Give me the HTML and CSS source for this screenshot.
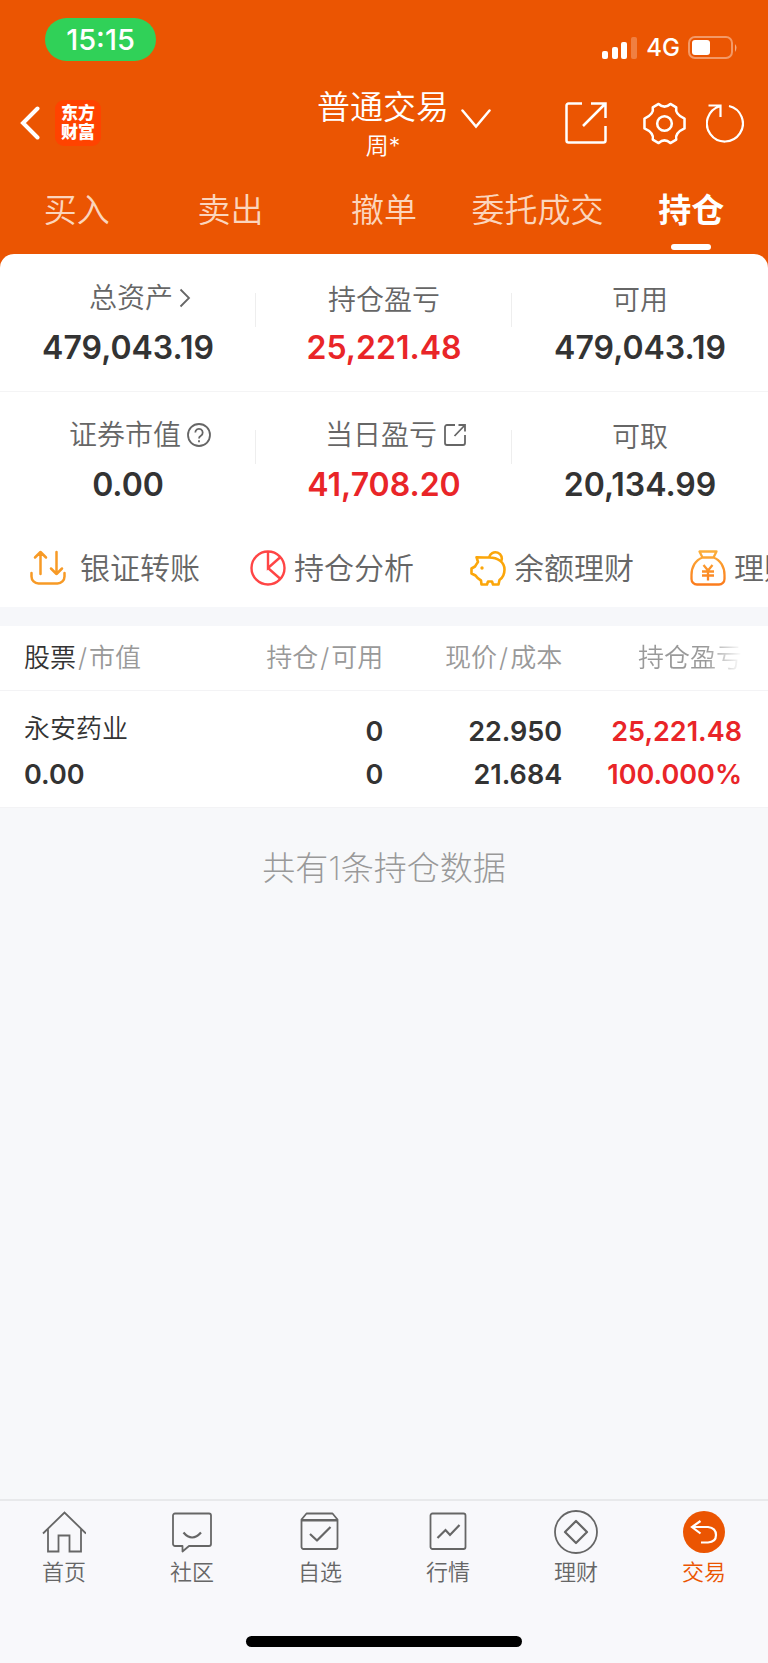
FILE: index.html
```html
<!DOCTYPE html>
<html lang="zh-CN">
<head>
  <meta charset="UTF-8">
  <meta name="viewport" content="width=device-width, initial-scale=1">
  <title>普通交易 - 持仓</title>
  <link rel="stylesheet" href="styles.css">
</head>
<body>

<header class="header">
  <div class="status">
    <span class="clock">15:15</span>
    <div class="signals">
      <svg width="36" height="22" viewBox="0 0 36 22" fill="#fff">
        <rect x="0" y="14" width="6" height="8" rx="2"/>
        <rect x="10" y="10" width="6" height="12" rx="2"/>
        <rect x="19" y="5" width="6" height="17" rx="2"/>
        <rect x="29" y="0" width="6" height="22" rx="2" opacity=".25"/>
      </svg>
      <span class="network">4G</span>
      <svg width="50" height="24" viewBox="0 0 50 24">
        <rect x="1" y="1" width="43" height="21" rx="6" fill="none" stroke="#fff" stroke-width="2" opacity=".4"/>
        <rect x="4" y="4" width="18" height="15" rx="3" fill="#fff"/>
        <path d="M47 8q3 3.500 0 8z" fill="#fff" opacity=".5"/>
      </svg>
    </div>
  </div>

  <div class="nav">
    <div class="nav-left">
      <button class="icon-button" aria-label="返回">
        <svg width="20" height="34" viewBox="0 0 20 34" fill="none" stroke="#fff" stroke-width="4" stroke-linecap="round"><path d="M17.500 2.500L3 17l14.500 14.500" stroke-linejoin="miter"/></svg>
      </button>
      <a class="logo" href="#">东方<br>财富</a>
    </div>
    <div class="nav-title">
      <h1>普通交易</h1>
      <p>周*</p>
    </div>
    <div class="nav-right">
      <button class="icon-button switch" aria-label="切换账户">
        <svg width="30" height="20" viewBox="0 0 30 20" fill="none" stroke="#fff" stroke-width="2.500" stroke-linecap="round"><path d="M1.500 1.500L15 17.500l13.500-16"/></svg>
      </button>
      <button class="icon-button share" aria-label="分享">
        <svg width="42" height="42" viewBox="0 0 42 42" fill="none" stroke="#fff" stroke-width="2.500"><path d="M17 1.500H3.500a2 2 0 0 0-2 2v35a2 2 0 0 0 2 2h35a2 2 0 0 0 2-2V24M26 1.500h14.500V16M40 2L18 24"/></svg>
      </button>
      <button class="icon-button gear" aria-label="设置">
        <svg width="43" height="43" viewBox="0 0 44 44" fill="none" stroke="#fff" stroke-width="2.600" stroke-linejoin="round"><path d="M16 2Q22 7.500 28 2L34 5.500Q32.500 12.500 42.500 17V27Q32.500 31.500 34 38.500L28 42Q22 36.500 16 42L10 38.500Q11.500 31.500 1.500 27V17Q11.500 12.500 10 5.500Z"/><circle cx="22" cy="22" r="7.500"/></svg>
      </button>
      <button class="icon-button" aria-label="刷新">
        <svg width="38" height="40" viewBox="0 0 38 40" fill="none" stroke="#fff" stroke-width="2.200"><path d="M23 3A18 18 0 1 1 14 3.200M2.500 2.500H14.500V14"/></svg>
      </button>
    </div>
  </div>

  <nav class="tabs">
    <a class="tab" href="#">买入</a>
    <a class="tab" href="#">卖出</a>
    <a class="tab" href="#">撤单</a>
    <a class="tab" href="#">委托成交</a>
    <a class="tab active" href="#">持仓</a>
  </nav>
</header>

<main class="main">
  <section class="assets">
    <div class="asset-row">
      <div class="asset">
        <a class="label" href="#">总资产<svg width="12" height="20" viewBox="0 0 12 20" fill="none" stroke="#666" stroke-width="1.800"><path d="M1.500 1.500L10 10l-8.500 8.500"/></svg></a>
        <strong>479,043.19</strong>
      </div>
      <div class="asset">
        <span class="label">持仓盈亏</span>
        <strong class="up">25,221.48</strong>
      </div>
      <div class="asset">
        <span class="label">可用</span>
        <strong>479,043.19</strong>
      </div>
    </div>
    <div class="asset-row">
      <div class="asset">
        <a class="label" href="#">证券市值<svg width="24" height="24" viewBox="0 0 24 24" fill="none" stroke="#666" stroke-width="1.800"><circle cx="12" cy="12" r="11"/><path d="M8.300 9.500a3.700 3.700 0 1 1 5.600 3.200c-1.300.800-1.900 1.300-1.900 2.800M12 17.200v2"/></svg></a>
        <strong>0.00</strong>
      </div>
      <div class="asset">
        <a class="label" href="#">当日盈亏<svg width="24" height="24" viewBox="0 0 24 24" fill="none" stroke="#666" stroke-width="1.800"><path d="M12 2H4a2 2 0 0 0-2 2v16a2 2 0 0 0 2 2h16a2 2 0 0 0 2-2v-8M15.500 2H22v6.500M22 2L11.500 13"/></svg></a>
        <strong class="up">41,708.20</strong>
      </div>
      <div class="asset">
        <span class="label">可取</span>
        <strong>20,134.99</strong>
      </div>
    </div>
  </section>

  <nav class="actions">
    <a class="action wide" href="#">
      <svg width="36" height="36" viewBox="0 0 36 36" fill="none" stroke="#f79a26" stroke-width="2.500" stroke-linecap="round" stroke-linejoin="round"><path d="M1.500 23v3.500a7 7 0 0 0 7 7h19a7 7 0 0 0 7-7V23M10.500 24V2M5 7.500L10.500 2l5.500 5.500M26.500 2v22M21 18.500l5.500 5.500 5.500-5.500"/></svg>
      银证转账
    </a>
    <a class="action" href="#">
      <svg width="36" height="36" viewBox="0 0 36 36" fill="none" stroke="#ff4545" stroke-width="2.400"><circle cx="18" cy="18" r="16.500"/><path d="M18 1.500V18L30.500 7M18 18l12.500 11"/></svg>
      持仓分析
    </a>
    <a class="action" href="#">
      <svg width="36" height="36" viewBox="0 0 36 36" fill="none" stroke="#fba60a" stroke-width="2.600" stroke-linejoin="round"><path d="M19 7.500H14L6.500 7.200 8 12Q6.500 14 5 16.500L1.500 18.500V23.500L5.500 25.500Q7.500 28.500 11 30.500L11.500 34.500H17L18 31.500H22L23 34.500H28.500L29.500 30Q34.500 26.500 34.500 19.500C34.500 12 28 7.500 19 7.500ZM19 7.500A6.500 6.500 0 1 1 31 12"/><circle cx="12" cy="18" r="1.700" fill="#fba60a" stroke="none"/></svg>
      余额理财
    </a>
    <a class="action" href="#">
      <svg width="36" height="36" viewBox="0 0 36 36" fill="none" stroke="url(#bag)" stroke-width="2.300" stroke-linejoin="round"><defs><linearGradient id="bag" gradientUnits="userSpaceOnUse" x1="0" y1="0" x2="0" y2="36"><stop offset="0" stop-color="#fcb03a"/><stop offset="1" stop-color="#fb7a1c"/></linearGradient></defs><path d="M9.500 1.500H26.500L23.500 7.500H12.500ZM12.500 7.500C5.500 10 1.500 17 1.500 25V29A5.500 5.500 0 0 0 7 34.500H29A5.500 5.500 0 0 0 34.500 29V25C34.500 17 30.500 10 23.500 7.500M13.500 15L18 20.500 22.500 15M12 21.500H24M12 25.500H24M18 20.500V30.500"/></svg>
      理财
    </a>
  </nav>

  <section class="holdings">
    <table>
      <thead>
        <tr>
          <th><b>股票</b><i>/</i>市值</th>
          <th>持仓<i>/</i>可用</th>
          <th>现价<i>/</i>成本</th>
          <th><span class="fade">持仓盈亏</span></th>
        </tr>
      </thead>
      <tbody>
        <tr>
          <td><span class="name">永安药业</span>0.00</td>
          <td>0<br>0</td>
          <td>22.950<br>21.684</td>
          <td class="up">25,221.48<br>100.000%</td>
        </tr>
      </tbody>
    </table>
  </section>

  <p class="total">共有1条持仓数据</p>
</main>

<footer class="footer">
  <nav class="tabbar">
    <a class="tabbar-item" href="#">
      <svg width="44" height="44" viewBox="0 0 44 44" fill="none" stroke="currentColor" stroke-width="1.800"><path d="M1 23.500L22.500 2.500 44 23.500M6 19V41.500H16.500V25.500H27.500V41.500H39V19"/></svg>
      首页
    </a>
    <a class="tabbar-item" href="#">
      <svg width="44" height="44" viewBox="0 0 44 44" fill="none" stroke="currentColor" stroke-width="1.800" stroke-linejoin="round"><path d="M5 3.500H39a2 2 0 0 1 2 2V34a2 2 0 0 1-2 2H19L12.500 41.500V36H5a2 2 0 0 1-2-2V5.500a2 2 0 0 1 2-2Z"/><path d="M13.500 22.500Q22 32.500 31 22.500" stroke-width="2.200"/></svg>
      社区
    </a>
    <a class="tabbar-item" href="#">
      <svg width="44" height="44" viewBox="0 0 44 44" fill="none" stroke="currentColor" stroke-width="1.800" stroke-linejoin="round"><path d="M3.500 9.500L8.500 3.500H34.500L39.500 9.500V37a2 2 0 0 1-2 2H5.500a2 2 0 0 1-2-2Z"/><path d="M3.500 10.200H39.500" stroke-width="2.600"/><path d="M12 24L19 30.500 32.500 17" stroke-width="2.200"/></svg>
      自选
    </a>
    <a class="tabbar-item" href="#">
      <svg width="44" height="44" viewBox="0 0 44 44" fill="none" stroke="currentColor" stroke-width="1.800"><rect x="4.500" y="3.500" width="35" height="35.500" rx="2"/><path d="M11.500 28L19.500 20 24 25 33.500 15" stroke-width="2.200"/></svg>
      行情
    </a>
    <a class="tabbar-item" href="#">
      <svg width="44" height="44" viewBox="0 0 44 44" fill="none" stroke="currentColor" stroke-width="1.800" stroke-linejoin="round"><circle cx="22" cy="22" r="21"/><path d="M22 11L33 22 22 33 11 22Z" stroke-width="2.200"/></svg>
      理财
    </a>
    <a class="tabbar-item active" href="#">
      <svg width="44" height="44" viewBox="0 0 44 44" fill="none"><circle cx="22" cy="22" r="21" fill="#eb5502"/><path d="M18.500 11L10 17 18.500 23.500M10 17H26Q34 18 34 25T26 32.500H19" stroke="#fff" stroke-width="2.200"/></svg>
      交易
    </a>
  </nav>
  <div class="home-indicator"></div>
</footer>

</body>
</html>
```
FILE: styles.css
```css
* {
  box-sizing: border-box;
}

body {
  margin: 0;
  min-height: 100vh;
  display: flex;
  flex-direction: column;
  background: #f7f8fa;
  color: #333;
  font-family: Inter, "Noto Sans CJK SC", sans-serif;
  font-weight: 350;
}

a {
  color: inherit;
  text-decoration: none;
}

h1, p {
  margin: 0;
  font-weight: inherit;
}

svg {
  display: block;
  flex: none;
}

/* header */
.header {
  background: #eb5502;
  color: #fff;
  padding-bottom: 14px;
}

.status {
  display: flex;
  justify-content: space-between;
  align-items: flex-start;
  height: 86px;
  padding: 18px 30px 0 45px;
}

.clock {
  width: 111px;
  padding-top: 1px;
  border-radius: 22px;
  background: #30d158;
  font-size: 29px;
  font-weight: 500;
  line-height: 42px;
  text-align: center;
}

.signals {
  display: flex;
  align-items: center;
  gap: 8px;
  margin-top: 18px;
}

.network {
  font-size: 24px;
  font-weight: 500;
  line-height: 24px;
}

.nav {
  display: grid;
  grid-template-columns: 1fr auto 1fr;
  align-items: center;
  padding: 0 22px 0 20px;
}

.nav-left, .nav-right {
  display: flex;
  align-items: center;
  margin-bottom: 4px;
}

.nav-right {
  margin-right: 2px;
}

.icon-button {
  padding: 0;
  border: none;
  background: none;
  cursor: pointer;
}

.logo {
  width: 46px;
  margin-left: 15px;
  padding: 4px 0;
  border-radius: 9px;
  background: #ff4300;
  font-size: 17px;
  font-weight: 900;
  line-height: 19px;
  text-align: center;
}

.nav-title {
  text-align: center;
}

.nav-title h1 {
  font-size: 33px;
  line-height: 42px;
}

.nav-title p {
  font-size: 23px;
  line-height: 36px;
}

.switch {
  margin: 0 auto 8px 12px;
}

.share {
  margin-right: 36px;
}

.gear {
  margin-right: 20px;
}

.tabs {
  display: grid;
  grid-template-columns: repeat(5, 1fr);
}

.tab {
  display: flex;
  flex-direction: column;
  align-items: center;
  padding-top: 26px;
  color: #fbd5bd;
  font-size: 33px;
  line-height: 40px;
}

.tab::after {
  content: "";
  width: 40px;
  height: 6px;
  margin: 14px 0 4px;
  border-radius: 3px;
}

.tab.active {
  color: #fff;
  font-weight: 700;
}

.tab.active::after {
  background: #fff;
}

/* the white sheet overlaps the header with its round corners */
.main {
  flex: 1;
  margin-top: -14px;
}

.assets {
  border-radius: 14px 14px 0 0;
  background: #fff;
}

.asset-row {
  display: grid;
  grid-template-columns: repeat(3, 1fr);
  padding: 27px 0 22px;
}

.asset-row + .asset-row {
  padding: 26px 0 24px;
  border-top: 1px solid #f4f4f5;
}

.asset {
  display: flex;
  flex-direction: column;
  align-items: center;
  gap: 8px;
  background: linear-gradient(#eee, #eee) no-repeat right 12px / 1px 34px;
}

.asset:last-child {
  background: none;
}

.label {
  display: flex;
  align-items: center;
  gap: 6px;
  color: #666;
  font-size: 28px;
  line-height: 38px;
}

a.label {
  margin: -2px 0 2px 24px;
}

.asset strong {
  font-size: 32px;
  font-weight: 600;
  line-height: 42px;
}

.up {
  color: #e92528;
}

.actions {
  display: flex;
  padding: 16px 0 17px 30px;
  overflow: hidden;
  background: #fff;
  border-bottom: 19px solid #f6f7fa;
}

.action {
  display: flex;
  align-items: center;
  gap: 8px;
  flex: none;
  width: 220px;
  color: #666;
  font-size: 30px;
  line-height: 44px;
}

.action.wide {
  gap: 14px;
}

/* holdings */
.holdings {
  background: #fff;
}

table {
  width: 100%;
  table-layout: fixed;
  border-collapse: collapse;
  text-align: right;
}

thead, tbody {
  border-bottom: 1px solid #f3f3f5;
}

th {
  width: 23.3%;
  height: 64px;
  padding: 0 0 4px;
  color: #999;
  font-size: 26px;
  font-weight: 350;
}

th b {
  color: #333;
  font-weight: inherit;
}

th i {
  padding: 0 2px;
  font-style: normal;
}

th:first-child, td:first-child {
  width: 26.6%;
  padding-left: 24px;
  text-align: left;
}

th:last-child, td:last-child {
  width: auto;
  padding-right: 26px;
}

.fade {
  background: linear-gradient(to right, #999 65%, #fff 100%);
  background-clip: text;
  color: transparent;
}

td {
  padding: 19px 0 11px;
  font-size: 27px;
  font-weight: 600;
  line-height: 43px;
}

.name {
  display: block;
  margin-bottom: 5px;
  font-size: 26px;
  font-weight: 350;
  line-height: 38px;
}

.total {
  padding: 36px 0;
  color: #999;
  font-size: 33px;
  font-weight: 200;
  line-height: 48px;
  text-align: center;
}

/* bottom bar */
.footer {
  border-top: 2px solid #e8e9eb;
  background: #f8f8fb;
}

.tabbar {
  display: grid;
  grid-template-columns: repeat(6, 1fr);
}

.tabbar-item {
  display: flex;
  flex-direction: column;
  align-items: center;
  gap: 2px;
  padding-top: 9px;
  color: #666;
  font-size: 22px;
  line-height: 32px;
}

.tabbar-item.active {
  color: #eb5502;
}

.home-indicator {
  width: 36%;
  height: 11px;
  margin: 48px auto 16px;
  border-radius: 6px;
  background: #000;
}
```
